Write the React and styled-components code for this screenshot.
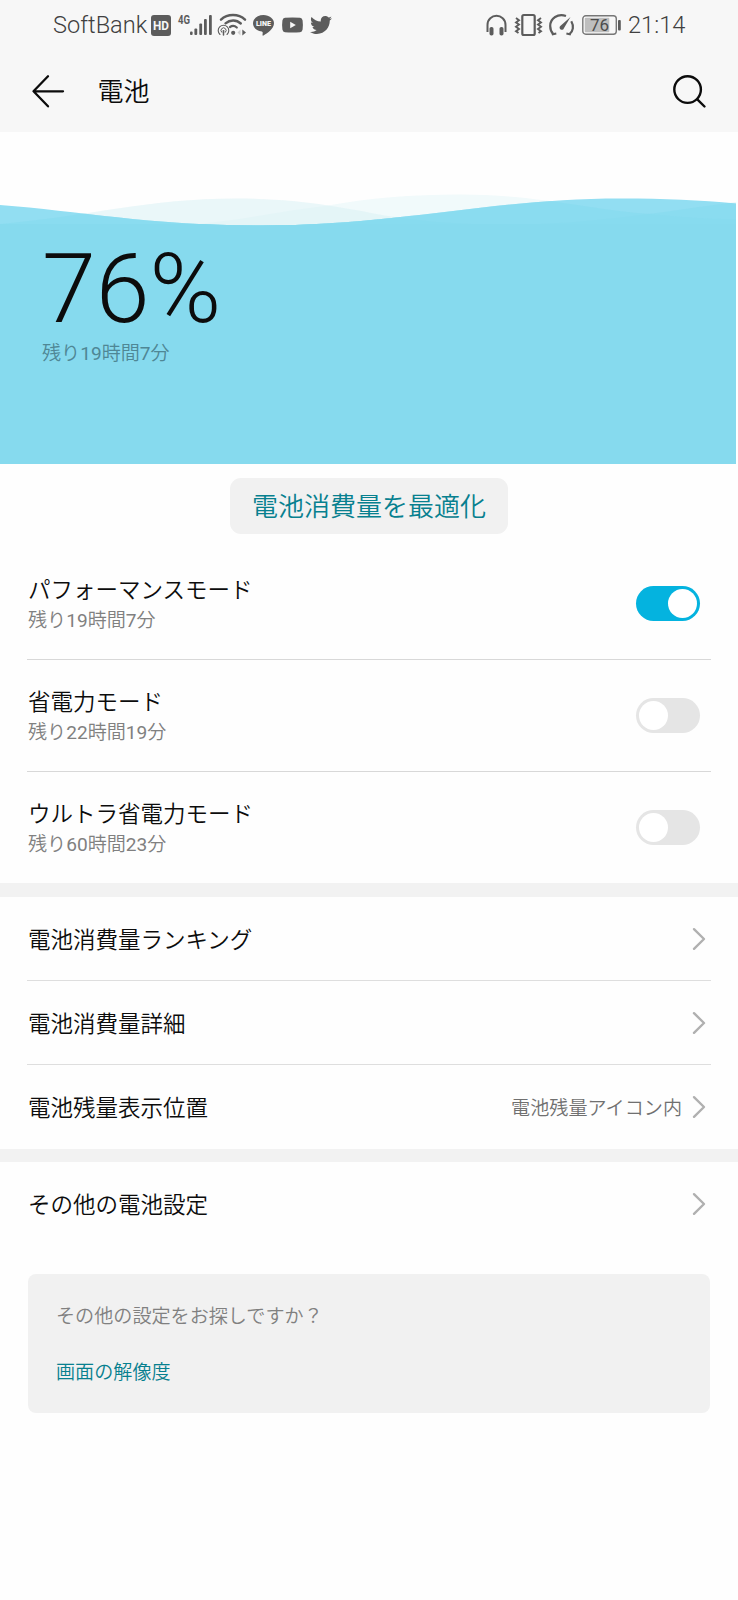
import React from "react";
import styled, { createGlobalStyle } from "styled-components";
import { FaTwitter } from "react-icons/fa";

const GlobalStyle = createGlobalStyle`
  *, *::before, *::after { box-sizing: border-box; }
  body {
    margin: 0;
    background: #fefefe;
    font-family: Roboto, "Noto Sans CJK JP DemiLight", "Noto Sans CJK JP", sans-serif;
    font-weight: 350;
    color: #0c0c0c;
  }
`;

const Screen = styled.div`
  width: 738px;
  min-height: 1600px;
  background: #fefefe;
`;

const StatusBar = styled.div`
  display: flex;
  align-items: center;
  justify-content: space-between;
  height: 50px;
  padding: 0 52px 0 53px;
  background: #f7f7f7;
  color: #5c5c5c;
`;

const StatusGroup = styled.div`
  display: flex;
  align-items: center;
  gap: ${(p) => p.$gap}px;
`;

const StatusText = styled.span`
  width: ${(p) => p.$width}px;
  font-size: 23.6px;
  font-weight: 300;
  line-height: 50px;
  color: #404040;
  white-space: nowrap;
`;

const Icon = styled.svg`
  display: block;
  flex: none;
  overflow: visible;
`;

const TwitterIcon = styled(FaTwitter)`
  display: block;
  flex: none;
  width: 22px;
  height: 22px;
  margin-left: 1px;
`;

const Header = styled.header`
  display: flex;
  align-items: center;
  height: 82px;
  padding: 0 32px;
  background: #f7f7f7;
`;

const Title = styled.h1`
  flex: 1;
  margin: 2px 0 0 32.5px;
  font-size: 26px;
  font-weight: 350;
  line-height: 80px;
`;

const Hero = styled.section`
  position: relative;
  height: 332px;
  padding: 107px 0 0 42px;
`;

const Waves = styled.svg`
  position: absolute;
  inset: 0;
  display: block;
`;

const Percent = styled.div`
  position: relative;
  font-size: 97px;
  font-weight: 300;
  line-height: 101px;
`;

const Remaining = styled.div`
  position: relative;
  font-size: 19.1px;
  font-weight: 350;
  line-height: 28px;
  color: #4f8795;
`;

const Digits = styled.span`
  font-weight: 400;
`;

const OptimizeArea = styled.div`
  display: flex;
  justify-content: center;
  height: 83px;
  padding-top: 14px;
`;

const OptimizeButton = styled.button`
  width: 278px;
  height: 56px;
  padding: 2px 0 0;
  border: 0;
  border-radius: 11px;
  background: #f1f1f1;
  color: #07808f;
  font-family: inherit;
  font-size: 26px;
  font-weight: 350;
  line-height: 54px;
`;

const Section = styled.section`
  border-top: ${(p) => p.$band || 0}px solid #f2f2f2;
`;

const Row = styled.div`
  display: flex;
  align-items: center;
  margin: 0 27px;
`;

const ModeItem = styled(Row)`
  height: 112px;
  padding: 0 11px 0 1px;
  & + & {
    box-shadow: inset 0 1px 0 #d8d8d8;
  }
`;

const LinkItem = styled(Row)`
  height: 84px;
  padding: 0 6px 0 1px;
  & + & {
    box-shadow: 0 -1px 0 #dedede;
  }
`;

const RowText = styled.div`
  flex: 1;
  padding-top: ${(p) => p.$offset}px;
`;

const RowTitle = styled.div`
  font-size: 22.5px;
  font-weight: 350;
  line-height: 32px;
`;

const RowSub = styled.div`
  font-size: 19.1px;
  font-weight: 350;
  line-height: 30px;
  color: #808080;
`;

const RowValue = styled.span`
  margin-right: 11px;
  font-size: 19.1px;
  font-weight: 350;
  color: #707070;
`;

const Toggle = styled.div`
  display: flex;
  justify-content: ${(p) => (p.$on ? "flex-end" : "flex-start")};
  width: 64px;
  height: 35px;
  padding: 3px;
  border-radius: 18px;
  background: ${(p) => (p.$on ? "#04b3df" : "#e5e5e5")};
`;

const Thumb = styled.span`
  width: 29px;
  height: 29px;
  border-radius: 50%;
  background: #fff;
`;

const HintCard = styled.div`
  margin: 28px 28px 0;
  height: 139px;
  padding: 29px 28px;
  border-radius: 8px;
  background: #f1f1f1;
  font-size: 19.1px;
  line-height: 28px;
`;

const HintQuestion = styled.div`
  color: #808080;
`;

const HintLink = styled.div`
  margin-top: 28px;
  color: #07808f;
`;

function HdIcon() {
  return (
    <Icon width="20" height="21" viewBox="0 0 20 21">
      <rect width="20" height="21" rx="3" fill="#5c5c5c" />
      <text x="2" y="15.2" fontSize="13" fontWeight="700" textLength="16" lengthAdjust="spacingAndGlyphs" fill="#f7f7f7">HD</text>
    </Icon>
  );
}

function SignalIcon() {
  return (
    <Icon width="34" height="22" viewBox="0 0 34 22">
      <text x="0" y="9.5" fontSize="13" fontWeight="700" textLength="12" lengthAdjust="spacingAndGlyphs" fill="#5c5c5c">4G</text>
      <g fill="#5c5c5c">
        <rect x="12" y="17.5" width="2.6" height="3.5" rx="1" />
        <rect x="16.4" y="14.5" width="2.8" height="6.5" rx="1" />
        <rect x="21.3" y="9.5" width="2.8" height="11.5" rx="1" />
        <rect x="26" y="5" width="2.8" height="16" rx="1" />
        <rect x="31" y="1" width="2.8" height="20" rx="1" />
      </g>
    </Icon>
  );
}

function WifiIcon() {
  return (
    <Icon width="28" height="22" viewBox="0 0 28 22" fill="none" stroke="#5c5c5c" strokeLinecap="round">
      <path d="M3 5.6C9.5-.4 20.5-.4 27 5.6" strokeWidth="2.5" />
      <path d="M7.5 9.3C12 5.5 18.5 5.5 22.8 9.5" strokeWidth="2.4" />
      <path d="M12 13C14 11.7 16.8 11.8 18.8 13.5" strokeWidth="2.2" />
      <path d="M2 20.5A5.3 5.3 0 1 1 9 20.5" strokeWidth="1.1" />
      <path d="M3.7 18.3A2.6 2.6 0 1 1 7.4 18.3" strokeWidth="1" />
      <circle cx="5.5" cy="17" r="1" fill="#5c5c5c" stroke="none" />
      <path d="M5.5 18V21" strokeWidth="1.5" />
      <circle cx="15.2" cy="18.8" r="2.1" fill="#5c5c5c" stroke="none" />
      <path d="M24.3 15.5L28 18.5L24.3 21.5Z" fill="#5c5c5c" stroke="none" />
      <path d="M22.5 15.5L19.5 18.5L22.5 21.5Z" fill="#cfcfcf" stroke="none" />
    </Icon>
  );
}

function LineIcon() {
  return (
    <Icon width="21" height="22" viewBox="0 0 21 22">
      <path d="M10.5 1C4.7 1 0 4.7 0 9.3c0 4.2 3.7 7.6 8.8 8.2.8.2 1 .7.9 1.5l-.2 2c0 .7.5.8 1 .5C14 19.5 21 15 21 9.3 21 4.7 16.3 1 10.5 1Z" fill="#5c5c5c" />
      <text x="3" y="11.8" fontSize="7" fontWeight="900" textLength="15" lengthAdjust="spacingAndGlyphs" fill="#f7f7f7">LINE</text>
    </Icon>
  );
}

const VideoFrame = styled(Icon)`
  margin-left: 1.5px;
`;

function VideoIcon() {
  return (
    <VideoFrame width="21" height="16" viewBox="0 0 21 16">
      <path d="M3 .8Q10.5 0 18 .8 20.2 1 20.6 3.5 21.2 8 20.6 12.5 20.2 15 18 15.2 10.5 16 3 15.2.8 15 .4 12.5-.2 8 .4 3.5.8 1 3 .8Z" fill="#5c5c5c" />
      <path d="M8.2 4.8V11.2L13.8 8Z" fill="#f7f7f7" />
    </VideoFrame>
  );
}

function HeadphonesIcon() {
  return (
    <Icon width="21" height="22" viewBox="0 0 21 22">
      <path d="M1.5 18V11C1.5-1.2 19.5-1.2 19.5 11V18" fill="none" stroke="#5c5c5c" strokeWidth="2" />
      <rect x="3.5" y="13" width="4" height="8.5" rx="1.8" fill="#5c5c5c" />
      <rect x="13.5" y="13" width="4" height="8.5" rx="1.8" fill="#5c5c5c" />
    </Icon>
  );
}

function VibrateIcon() {
  return (
    <Icon width="27" height="22" viewBox="0 0 27 22" fill="none" stroke="#5c5c5c">
      <rect x="7.3" y="1" width="12.4" height="20" rx="1.5" strokeWidth="2.2" />
      <path d="M1 4L4 6.2 1 8.4 4 10.6 1 12.8 4 15 1 17.2 3.5 19" strokeWidth="1.9" />
      <path d="M26 4L23 6.2 26 8.4 23 10.6 26 12.8 23 15 26 17.2 23.5 19" strokeWidth="1.9" />
    </Icon>
  );
}

function GaugeIcon() {
  return (
    <Icon width="25" height="22" viewBox="0 0 25 22" fill="none" stroke="#5c5c5c">
      <path d="M17 2C9-.8 1.2 4 1.2 12C1.2 15.5 2.3 18 4.2 20" strokeWidth="2.2" />
      <path d="M22.3 7.3C25 12 24.3 17.3 20.5 20.2" strokeWidth="2.2" />
      <path d="M2.8 20.5L7.3 19.5M17.4 19.5L21.8 20.5" strokeWidth="2" />
      <path d="M21.5 3L14.9 14.2A2.2 2.2 0 1 1 11.3 12Z" fill="#5c5c5c" stroke="none" />
    </Icon>
  );
}

function BatteryIcon() {
  return (
    <Icon width="39" height="20" viewBox="0 0 39 20">
      <rect x=".8" y=".8" width="33.5" height="18.4" rx="3" fill="none" stroke="#777" strokeWidth="1.4" />
      <rect x="2.8" y="2.8" width="24.5" height="14.4" rx="1" fill="#bebebe" />
      <rect x="36" y="5" width="2.8" height="10.5" rx="1" fill="#5c5c5c" />
      <text x="17.5" y="16" textAnchor="middle" fontSize="17" fontWeight="400" fill="#4c4c4c">76</text>
    </Icon>
  );
}

function BackIcon() {
  return (
    <Icon width="33" height="32" viewBox="0 0 33 32" fill="none" stroke="#0c0c0c" strokeWidth="2.3" strokeLinecap="round" strokeLinejoin="round">
      <path d="M16 1.3L1.5 16.3L16 31.3M1.5 16.3H31" />
    </Icon>
  );
}

function SearchIcon() {
  return (
    <Icon width="33" height="33" viewBox="0 0 33 33" fill="none" stroke="#0c0c0c" strokeWidth="2.4" strokeLinecap="round">
      <circle cx="14.6" cy="14.6" r="13.3" />
      <path d="M24.3 24.3L31.5 31.5" />
    </Icon>
  );
}

function Chevron() {
  return (
    <Icon width="12" height="22" viewBox="0 0 12 22" fill="none" stroke="#b0b0b0" strokeWidth="2.4" strokeLinecap="round" strokeLinejoin="round">
      <path d="M1 1.2L11 11L1 20.8" />
    </Icon>
  );
}

const SURFACE = "M0 73C80 79 150 93.5 260 93.5C400 93.5 490 66.5 621 66.5C665 66.5 700 68 736 71.5V332H0Z";
const SWELL_A = "M0 92C90 84 150 66.5 235 66.5C300 66.5 345 76 385 83.5C430 91 470 92.5 510 92.5C590 92.5 660 80 736 70V332H0Z";
const SWELL_B = "M0 94H170C240 90 270 80 325 74C370 66 410 62.5 460 62.5C540 62.5 590 78 650 82C690 86 710 87 736 87V332H0Z";

function BatteryWaves() {
  return (
    <Waves width="738" height="332" viewBox="0 0 738 332">
      <clipPath id="surface">
        <path d={SURFACE} />
      </clipPath>
      <path d={SWELL_B} fill="#f1fafb" />
      <path d={SWELL_A} fill="#dcf2f5" fillOpacity="0.6" />
      <path d={SURFACE} fill="#92def2" />
      <g clipPath="url(#surface)" fill="#86daee">
        <path d={SWELL_A} fillOpacity="0.6" />
        <path d={SWELL_B} fillOpacity="0.6" />
        <rect y="92" width="736" height="240" />
      </g>
    </Waves>
  );
}

const MODES = [
  { title: "パフォーマンスモード", sub: "残り19時間7分", on: true },
  { title: "省電力モード", sub: "残り22時間19分", on: false },
  { title: "ウルトラ省電力モード", sub: "残り60時間23分", on: false },
];

const LINKS = [
  { title: "電池消費量ランキング" },
  { title: "電池消費量詳細" },
  { title: "電池残量表示位置", value: "電池残量アイコン内" },
];

function TimeText({ children }) {
  return children
    .split(/(\d+)/)
    .map((part, i) => (/^\d+$/.test(part) ? <Digits key={i}>{part}</Digits> : part));
}

function LinkRow({ title, value }) {
  return (
    <LinkItem>
      <RowText $offset={1}>
        <RowTitle>{title}</RowTitle>
      </RowText>
      {value && <RowValue>{value}</RowValue>}
      <Chevron />
    </LinkItem>
  );
}

export default function App() {
  return (
    <Screen>
      <GlobalStyle />
      <StatusBar>
        <StatusGroup $gap={6.5}>
          <StatusGroup $gap={4}>
            <StatusText $width={94}>SoftBank</StatusText>
            <HdIcon />
          </StatusGroup>
          <SignalIcon />
          <WifiIcon />
          <LineIcon />
          <VideoIcon />
          <TwitterIcon />
        </StatusGroup>
        <StatusGroup $gap={7.5}>
          <HeadphonesIcon />
          <VibrateIcon />
          <GaugeIcon />
          <BatteryIcon />
          <StatusText $width={58}>21:14</StatusText>
        </StatusGroup>
      </StatusBar>
      <Header>
        <BackIcon />
        <Title>電池</Title>
        <SearchIcon />
      </Header>
      <Hero>
        <BatteryWaves />
        <Percent>76%</Percent>
        <Remaining>
          <TimeText>残り19時間7分</TimeText>
        </Remaining>
      </Hero>
      <OptimizeArea>
        <OptimizeButton>電池消費量を最適化</OptimizeButton>
      </OptimizeArea>
      <Section>
        {MODES.map((mode) => (
          <ModeItem key={mode.title}>
            <RowText $offset={4}>
              <RowTitle>{mode.title}</RowTitle>
              <RowSub>
                <TimeText>{mode.sub}</TimeText>
              </RowSub>
            </RowText>
            <Toggle $on={mode.on}>
              <Thumb />
            </Toggle>
          </ModeItem>
        ))}
      </Section>
      <Section $band={14}>
        {LINKS.map((link) => (
          <LinkRow key={link.title} {...link} />
        ))}
      </Section>
      <Section $band={13}>
        <LinkRow title="その他の電池設定" />
      </Section>
      <HintCard>
        <HintQuestion>その他の設定をお探しですか？</HintQuestion>
        <HintLink>画面の解像度</HintLink>
      </HintCard>
    </Screen>
  );
}
